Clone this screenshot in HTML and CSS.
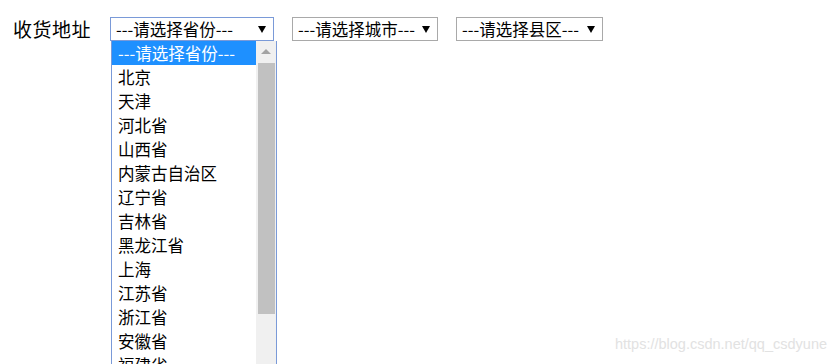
FILE: index.html
```html
<!DOCTYPE html>
<html lang="zh-CN">
<head>
<meta charset="utf-8">
<title>收货地址</title>
<link rel="stylesheet" href="styles.css">
</head>
<body>
<div class="page">
  <div class="address-row">
    <span class="label">收货地址</span>
    <div class="select select-open select-province">
      <span class="select-text">---请选择省份---</span>
      <span class="arrow"></span>
      <div class="dropdown">
        <ul class="options">
          <li class="option selected">---请选择省份---</li>
          <li class="option">北京</li>
          <li class="option">天津</li>
          <li class="option">河北省</li>
          <li class="option">山西省</li>
          <li class="option">内蒙古自治区</li>
          <li class="option">辽宁省</li>
          <li class="option">吉林省</li>
          <li class="option">黑龙江省</li>
          <li class="option">上海</li>
          <li class="option">江苏省</li>
          <li class="option">浙江省</li>
          <li class="option">安徽省</li>
          <li class="option">福建省</li>
        </ul>
        <div class="scrollbar">
          <span class="scroll-up"></span>
          <span class="scroll-thumb"></span>
        </div>
      </div>
    </div>
    <div class="select select-city">
      <span class="select-text">---请选择城市---</span>
      <span class="arrow"></span>
    </div>
    <div class="select select-county">
      <span class="select-text">---请选择县区---</span>
      <span class="arrow"></span>
    </div>
  </div>
  <div class="watermark">https://blog.csdn.net/qq_csdyune</div>
</div>
</body>
</html>
```

FILE: styles.css
```css
html, body {
  margin: 0;
  padding: 0;
  background: #ffffff;
}

body {
  font-family: "Noto Sans CJK SC", "Noto Sans", sans-serif;
  color: #000000;
  width: 833px;
  height: 364px;
  overflow: hidden;
}

.page {
  position: relative;
  width: 833px;
  height: 364px;
}

.address-row {
  display: flex;
  align-items: center;
  padding: 17px 0 0 13px;
}

.label {
  font-size: 19px;
  line-height: 24px;
  width: 97px;
  letter-spacing: 0.5px;
}

.select {
  position: relative;
  box-sizing: border-box;
  height: 24px;
  border: 1px solid #a9a9a9;
  display: flex;
  align-items: center;
  padding-left: 5px;
  font-size: 16.5px;
  line-height: 22px;
  margin-right: 18px;
}

.select-text {
  font-family: "Noto Sans CJK SC", sans-serif;
  white-space: nowrap;
}

.select-province {
  width: 164px;
  border-color: #7a9ad8;
}

.select-city {
  width: 146px;
}

.select-county {
  width: 147px;
}

.arrow {
  position: absolute;
  right: 7px;
  top: 8px;
  width: 0;
  height: 0;
  border-left: 4px solid transparent;
  border-right: 4px solid transparent;
  border-top: 7px solid #000000;
}

.dropdown {
  position: absolute;
  left: 0;
  top: 23px;
  width: 166px;
  height: 330px;
  box-sizing: border-box;
  background: #ffffff;
  border-left: 1px solid #7a9ad8;
  border-right: 1px solid #7a9ad8;
  display: flex;
  z-index: 2;
}

.options {
  list-style: none;
  margin: 0;
  padding: 0;
  flex: 1;
}

.option {
  height: 24px;
  line-height: 24px;
  padding-left: 6px;
  font-size: 16.5px;
  white-space: nowrap;
}

.option.selected {
  background: #1e90ff;
  color: #ffffff;
}

.scrollbar {
  position: relative;
  width: 20px;
  background: #f0f0f0;
}

.scroll-up {
  position: absolute;
  left: 5px;
  top: 8px;
  width: 0;
  height: 0;
  border-left: 5px solid transparent;
  border-right: 5px solid transparent;
  border-bottom: 5px solid #a3a3a3;
}

.scroll-thumb {
  position: absolute;
  left: 2px;
  top: 22px;
  width: 17px;
  height: 251px;
  background: #c1c1c1;
}

.watermark {
  position: absolute;
  left: 615px;
  top: 336px;
  font-family: "Liberation Sans", sans-serif;
  font-size: 14.5px;
  color: #e2e2e2;
  white-space: nowrap;
}
```
